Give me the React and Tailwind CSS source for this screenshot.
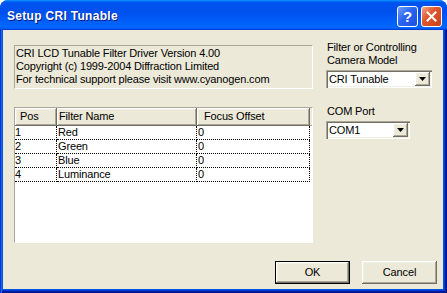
export default function App() {
  const rows = [
    ["1", "Red", "0"],
    ["2", "Green", "0"],
    ["3", "Blue", "0"],
    ["4", "Luminance", "0"],
  ];
  const raised =
    "bg-[#ece9d8] shadow-[inset_-1px_-1px_#716f64,inset_1px_1px_#ffffff,inset_-2px_-2px_#aca899,inset_2px_2px_#f1efe2]";
  const sunken =
    "bg-white shadow-[inset_1px_1px_#aca899,inset_2px_2px_#716f64,inset_-1px_-1px_#ffffff,inset_-2px_-2px_#f1efe2]";
  const Arrow = () => (
    <svg width="7" height="4" viewBox="0 0 7 4">
      <path d="M0 0h7L3.5 4z" fill="#000" />
    </svg>
  );
  return (
    <div className="w-[447px] h-[293px] flex flex-col rounded-t-[8px] overflow-hidden bg-[#0054e3] font-['Liberation_Sans',Arial,sans-serif] text-[11px] leading-[13px] tracking-[-0.15px] text-black">
      <div className="h-[30px] shrink-0 flex items-center pt-[2px] pl-[7px] pr-[5px] bg-[linear-gradient(180deg,#0997ff,#0053ee_8%,#0050ee_40%,#0066ff_88%,#0066ff_93%,#005bff_95%,#003dd7_96%,#003dd7)]">
        <span className="text-white font-bold text-[12px] leading-[14px] tracking-[0.3px] [text-shadow:1px_1px_0_#0a1883]">
          Setup CRI Tunable
        </span>
        <div className="ml-auto flex gap-[3px]">
          <div className="w-[21px] h-[21px] rounded-[3px] border border-white bg-[linear-gradient(135deg,#6fa0fb,#2a64f0_45%,#1c50e0)] flex items-center justify-center text-white font-bold text-[15px] leading-[15px]">
            ?
          </div>
          <div className="w-[21px] h-[21px] rounded-[3px] border border-white bg-[linear-gradient(135deg,#f0a48a,#e2572e_40%,#c7401a)] flex items-center justify-center">
            <svg width="11" height="11" viewBox="0 0 11 11">
              <path d="M1.5 1.5l8 8M9.5 1.5l-8 8" stroke="#fff" strokeWidth="2" strokeLinecap="square" />
            </svg>
          </div>
        </div>
      </div>
      <div className="flex-1 flex pl-[3px] pr-[4px] pb-[4px] shadow-[inset_1px_0_#0831d9,inset_2px_0_#166aee,inset_-1px_-1px_#00138c,inset_-2px_-2px_#001ea0,inset_-3px_-3px_#003bda]">
        <div className="flex-1 bg-[#ece9d8] flex flex-col pt-[11px] pl-[11px] pr-[6px]">
          <div className="flex">
            <div className="w-[299px] flex flex-col pt-[4px]">
              <div className="h-[44px] border border-t-[#aca899] border-l-[#aca899] border-r-white border-b-white pl-[1px] pt-[1px]">
                <div>CRI LCD Tunable Filter Driver Version 4.00</div>
                <div>Copyright (c) 1999-2004 Diffraction Limited</div>
                <div>For technical support please visit www.cyanogen.com</div>
              </div>
              <div className="mt-[18px] h-[136px] bg-white border border-t-[#aca899] border-l-[#aca899] border-r-white border-b-white flex flex-col">
                <div className="flex h-[18px] shrink-0">
                  <div className={`w-[42px] h-full pl-[5px] pt-[2px] ${raised}`}>Pos</div>
                  <div className={`w-[140px] h-full pl-[2px] pt-[2px] ${raised}`}>Filter Name</div>
                  <div className={`w-[113px] h-full pl-[7px] pt-[2px] ${raised}`}>Focus Offset</div>
                  <div className="flex-1 h-full bg-[#ece9d8] border-b border-[#aca899]" />
                </div>
                {rows.map((r) => (
                  <div key={r[0]} className="flex h-[14px] leading-[13px]">
                    <div className="w-[42px] border-r border-b border-dotted border-black">{r[0]}</div>
                    <div className="w-[140px] pl-[1px] border-r border-b border-dotted border-black">{r[1]}</div>
                    <div className="w-[113px] pl-[1px] border-r border-b border-dotted border-black">{r[2]}</div>
                  </div>
                ))}
              </div>
            </div>
            <div className="ml-[13px] flex flex-col">
              <div className="pl-[1px]">Filter or Controlling</div>
              <div className="pl-[1px]">Camera Model</div>
              <div className={`mt-[3px] w-[106px] h-[18px] flex items-center pl-[3px] pr-[2px] ${sunken}`}>
                <span>CRI Tunable</span>
                <div className={`ml-auto w-[15px] h-[14px] flex items-center justify-center ${raised}`}>
                  <Arrow />
                </div>
              </div>
              <div className="mt-[17px] pl-[1px]">COM Port</div>
              <div className={`mt-[3px] w-[84px] h-[18px] flex items-center pl-[3px] pr-[2px] ${sunken}`}>
                <span>COM1</span>
                <div className={`ml-auto w-[15px] h-[14px] flex items-center justify-center ${raised}`}>
                  <Arrow />
                </div>
              </div>
            </div>
          </div>
          <div className="mt-[18px] flex justify-end gap-[12px]">
            <div className="w-[75px] h-[23px] border border-black">
              <div className={`w-full h-full flex items-center justify-center ${raised}`}>OK</div>
            </div>
            <div className={`w-[75px] h-[23px] flex items-center justify-center ${raised}`}>Cancel</div>
          </div>
        </div>
      </div>
    </div>
  );
}
